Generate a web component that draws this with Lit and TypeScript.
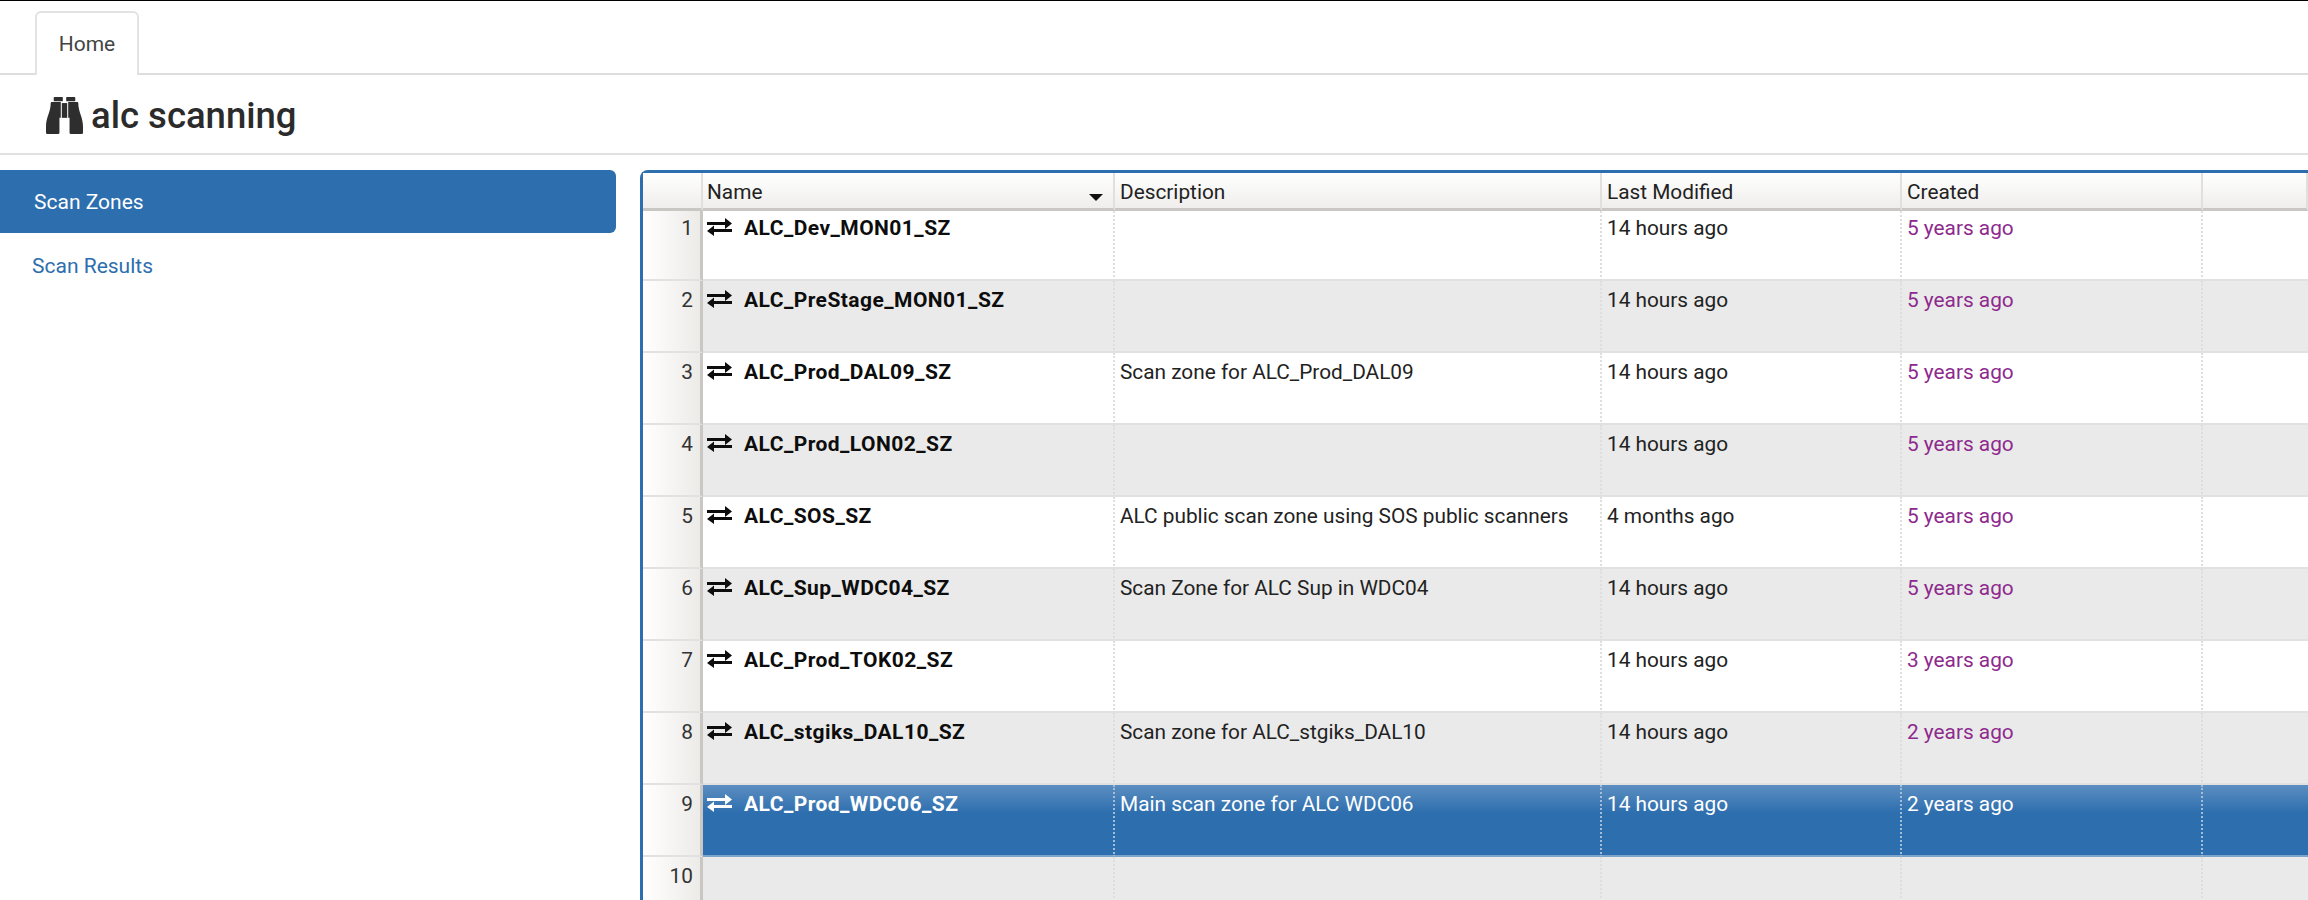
import {css, html, LitElement, svg} from 'lit'
import {customElement} from 'lit/decorators.js'

interface Zone {
  name: string
  description: string
  modified: string
  created: string
}

const zones: Zone[] = [
  {name: 'ALC_Dev_MON01_SZ', description: '', modified: '14 hours ago', created: '5 years ago'},
  {name: 'ALC_PreStage_MON01_SZ', description: '', modified: '14 hours ago', created: '5 years ago'},
  {name: 'ALC_Prod_DAL09_SZ', description: 'Scan zone for ALC_Prod_DAL09', modified: '14 hours ago', created: '5 years ago'},
  {name: 'ALC_Prod_LON02_SZ', description: '', modified: '14 hours ago', created: '5 years ago'},
  {name: 'ALC_SOS_SZ', description: 'ALC public scan zone using SOS public scanners', modified: '4 months ago', created: '5 years ago'},
  {name: 'ALC_Sup_WDC04_SZ', description: 'Scan Zone for ALC Sup in WDC04', modified: '14 hours ago', created: '5 years ago'},
  {name: 'ALC_Prod_TOK02_SZ', description: '', modified: '14 hours ago', created: '3 years ago'},
  {name: 'ALC_stgiks_DAL10_SZ', description: 'Scan zone for ALC_stgiks_DAL10', modified: '14 hours ago', created: '2 years ago'},
  {name: 'ALC_Prod_WDC06_SZ', description: 'Main scan zone for ALC WDC06', modified: '14 hours ago', created: '2 years ago'},
  {name: '', description: '', modified: '', created: ''},
]

const selectedRow = 8

const binoculars = svg`
  <path d="M23 2a2 2 0 0 1 2-2h23a2 2 0 0 1 2 2v11H23z"/>
  <path d="M60 2a2 2 0 0 1 2-2h23a2 2 0 0 1 2 2v11H60z"/>
  <path d="M14 18q0-3 3-3h27v47h-4v44q0 4-4 4H4q-4 0-4-4V88C0 60 14 45 14 18z"/>
  <path d="M47 18h16v44H47z"/>
  <path d="M96 18q0-3-3-3H66v47h4v44q0 4 4 4h32q4 0 4-4V88C110 60 96 45 96 18z"/>`

const exchange = svg`<path d="M0 4h18V0l7 5.500-7 5.500V7H0zM25 11H7V7.500L0 13l7 5v-4h18z"/>`

@customElement('app-root')
export class AppRoot extends LitElement {
  static styles = css`
    :host {
      background: #fff;
      color: #222;
      display: block;
      font-family: Roboto, "Liberation Sans", sans-serif;
      height: 900px;
      overflow: hidden;
    }

    .tabs {
      border-bottom: 2px solid #ddd;
      border-top: 1px solid #000;
      box-sizing: border-box;
      display: flex;
      height: 75px;
      padding: 10px 0 0 35px;
    }

    .tab {
      align-items: center;
      background: #fff;
      border: 2px solid #e2e2e2;
      border-bottom: 0;
      border-radius: 6px 6px 0 0;
      box-sizing: border-box;
      color: #444;
      display: flex;
      font-size: 21px;
      height: 64px;
      justify-content: center;
      margin-bottom: -2px;
      width: 104px;
    }

    .title {
      align-items: center;
      border-bottom: 2px solid #e0e0e0;
      box-sizing: border-box;
      color: #2b2b2b;
      display: flex;
      font-size: 36.500px;
      font-weight: 500;
      gap: 8px;
      height: 80px;
      padding: 2px 0 0 46px;
    }

    .title svg {
      fill: #2e2e2e;
      height: 37px;
      width: 37px;
    }

    .content {
      display: flex;
      gap: 24px;
      padding-top: 15px;
    }

    .nav {
      flex: 0 0 616px;
    }

    .nav-item {
      align-items: center;
      background: #2d6eae;
      border-radius: 0 6px 6px 0;
      box-sizing: border-box;
      color: #fff;
      display: flex;
      font-size: 21px;
      height: 63px;
      padding: 1px 0 0 34px;
    }

    .nav-link {
      color: #2d6eae;
      font-size: 21px;
      margin-top: 21px;
      padding-left: 32px;
    }

    .grid {
      border-left: 3px solid #2d6eae;
      border-radius: 8px 0 0 0;
      border-top: 3px solid #2d6eae;
      flex: 1;
      font-size: 20.800px;
      min-width: 0;
    }

    .row {
      display: grid;
      grid-template-columns: 60px 412px 487px 300px 301px 1fr;
      height: 72px;
    }

    .row:nth-child(2) {
      height: 70px;
    }

    .row:nth-child(2) > div {
      padding-top: 5px;
    }

    .row > div {
      border-bottom: 2px solid #e2e0e0;
      border-right: 2px dotted #dedede;
      box-sizing: border-box;
      padding: 7px 4px 0 5px;
      white-space: nowrap;
    }

    .row > div:last-child {
      border-right: 0;
    }

    .row > .num {
      background: linear-gradient(to right, #fff, #ecebe8);
      border-right: 3px solid #c9c7c3;
      color: #333;
      padding-right: 7px;
      text-align: right;
    }

    .row.odd > div:not(.num) {
      background: #eaeaea;
    }

    .row.selected > div:not(.num) {
      background: linear-gradient(to bottom, #5c8ec1, #2d6eae 40%);
      border-bottom-color: #7ba3cc;
      border-right-color: #a3bcd8;
      color: #fff;
    }

    .row > .name-cell {
      align-items: flex-start;
      color: #0d0d0d;
      display: flex;
      font-size: 21px;
      font-weight: 700;
      gap: 12px;
      letter-spacing: 0.450px;
      padding-left: 4px;
    }

    .name-cell svg {
      fill: currentColor;
      flex: none;
      height: 18px;
      margin-top: 2px;
      width: 25px;
    }

    .created {
      color: #8e2a8e;
    }

    .row.selected .created {
      color: #fff;
    }

    .row.head {
      height: 38px;
    }

    .row.head > div {
      background: linear-gradient(to bottom, #fff, #efeeec);
      border-bottom: 3px solid #c9c7c3;
      border-right: 2px solid #e2e0dd;
      color: #222;
      padding-top: 7px;
    }

    .row.head > .name {
      display: flex;
      justify-content: space-between;
      padding-left: 4px;
    }

    .sort {
      fill: #111;
      height: 7px;
      margin: 14px 6px 0 0;
      width: 14px;
    }
  `

  renderRow(zone: Zone, index: number) {
    const cls = [
      'row',
      index % 2 === 1 ? 'odd' : '',
      index === selectedRow ? 'selected' : '',
    ].join(' ')
    return html`
      <div class=${cls}>
        <div class="num">${index + 1}</div>
        <div class="name-cell">
          ${zone.name ? html`<svg viewBox="0 0 25 18">${exchange}</svg><span>${zone.name}</span>` : ''}
        </div>
        <div>${zone.description}</div>
        <div>${zone.modified}</div>
        <div class="created">${zone.created}</div>
        <div></div>
      </div>`
  }

  render() {
    return html`
      <div class="tabs"><div class="tab">Home</div></div>
      <div class="title">
        <svg viewBox="0 0 110 110">${binoculars}</svg>
        <span>alc scanning</span>
      </div>
      <div class="content">
        <div class="nav">
          <div class="nav-item">Scan Zones</div>
          <div class="nav-link">Scan Results</div>
        </div>
        <div class="grid">
          <div class="row head">
            <div class="num"></div>
            <div class="name">
              <span>Name</span>
              <svg class="sort" viewBox="0 0 14 7"><path d="M0 0h14L7 7z"/></svg>
            </div>
            <div>Description</div>
            <div>Last Modified</div>
            <div>Created</div>
            <div></div>
          </div>
          ${zones.map((zone, i) => this.renderRow(zone, i))}
        </div>
      </div>`
  }
}
